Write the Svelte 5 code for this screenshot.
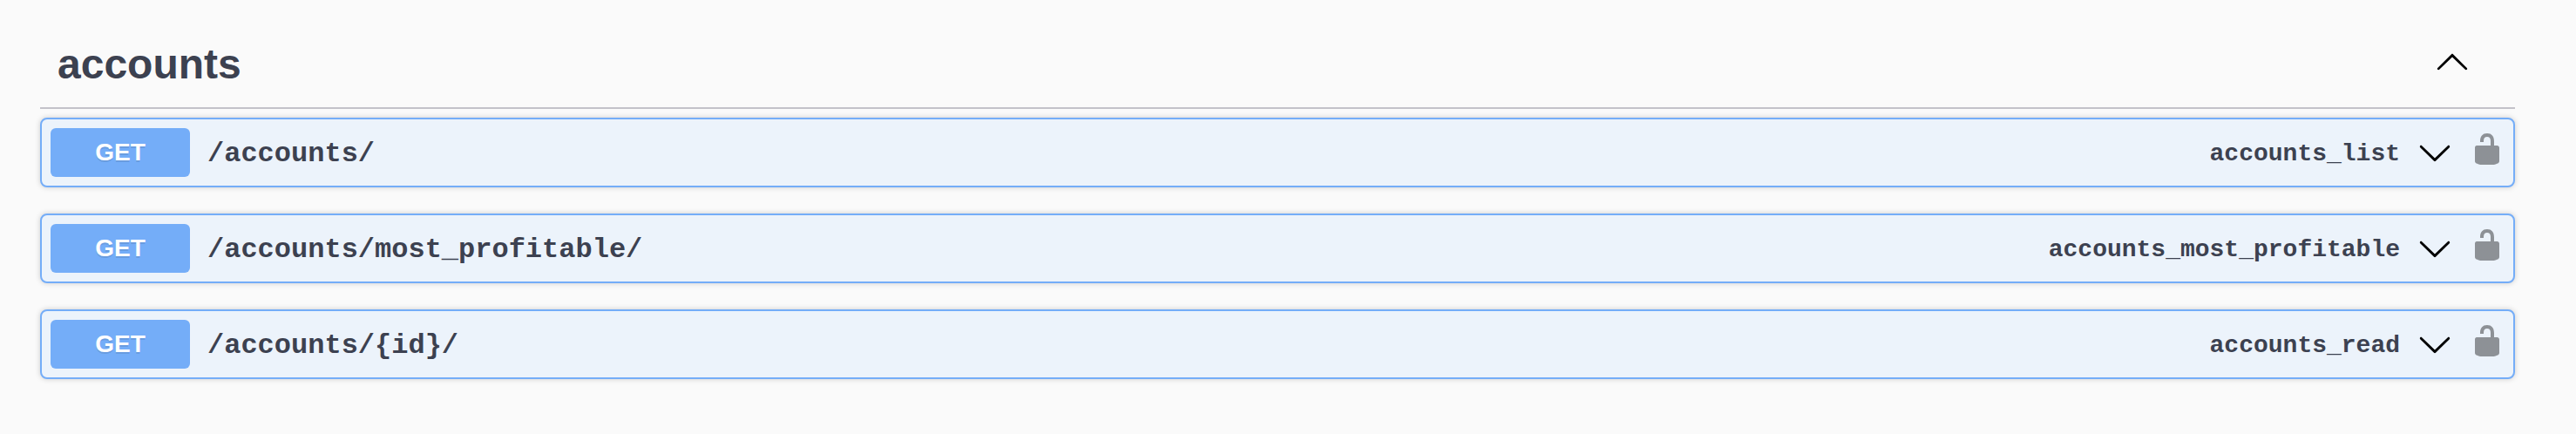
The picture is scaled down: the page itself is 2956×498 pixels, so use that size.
<script>
  const operations = [
    { method: 'GET', path: '/accounts/', id: 'accounts_list' },
    { method: 'GET', path: '/accounts/most_profitable/', id: 'accounts_most_profitable' },
    { method: 'GET', path: '/accounts/{id}/', id: 'accounts_read' }
  ];
</script>

<section class="tag">
  <header class="tag-header">
    <h3>accounts</h3>
    <svg class="icon" viewBox="0 0 20 20" aria-hidden="true">
      <path d="M17.418 14.908c.272.268.709.268.979 0s.271-.701 0-.969l-7.908-7.83c-.27-.268-.707-.268-.979 0l-7.908 7.83c-.27.268-.27.701 0 .969.271.268.709.268.979 0L10 7.767z" />
    </svg>
  </header>

  <div class="operations">
    {#each operations as op}
      <div class="operation">
        <span class="method">{op.method}</span>
        <span class="path">{op.path}</span>
        <span class="id">{op.id}</span>
        <svg class="icon" viewBox="0 0 20 20" aria-hidden="true">
          <path d="M17.418 6.109c.272-.268.709-.268.979 0s.271.701 0 .969l-7.908 7.83c-.27.268-.707.268-.979 0l-7.908-7.83c-.27-.268-.27-.701 0-.969.271-.268.709-.268.979 0L10 13.25z" />
        </svg>
        <svg class="icon lock" viewBox="0 0 20 20" aria-hidden="true">
          <path d="M15.8 8H14V5.6C14 2.703 12.665 1 10 1 7.334 1 6 2.703 6 5.6V6h2v-.801C8 3.754 8.797 3 10 3c1.203 0 2 .754 2 2.199V8H4c-.553 0-1 .646-1 1.199V17c0 .549.428 1.139.951 1.307l1.197.387C5.672 18.861 6.55 19 7.1 19h5.8c.549 0 1.428-.139 1.951-.307l1.196-.387c.524-.167.953-.757.953-1.306V9.199C17 8.646 16.352 8 15.8 8z" />
        </svg>
      </div>
    {/each}
  </div>
</section>

<style>
  :global(body) {
    background: #fafafa;
  }

  .tag {
    box-sizing: border-box;
    height: 498px;
    padding: 15px 70px 0 46px;
    color: #3c4150;
    font-family: 'Liberation Sans', Arial, sans-serif;
  }

  .tag-header {
    box-sizing: border-box;
    height: 110px;
    display: flex;
    align-items: center;
    justify-content: space-between;
    padding: 2px 52px 0 20px;
    border-bottom: 2px solid #c3c2c9;
  }

  h3 {
    margin: 7px 0 0;
    font-size: 48px;
    line-height: 56px;
    font-weight: 700;
  }

  .icon {
    flex: none;
    width: 40px;
    height: 40px;
    fill: #000;
  }

  .operations {
    display: grid;
    gap: 30px;
    padding-top: 10px;
  }

  .operation {
    box-sizing: border-box;
    height: 80px;
    display: flex;
    align-items: center;
    gap: 20px;
    padding: 0 10px;
    border: 2px solid #74adf8;
    border-radius: 8px;
    background: #ecf3fb;
    box-shadow: 0 0 6px rgba(0, 0, 0, 0.19);
  }

  .method {
    flex: none;
    width: 160px;
    border-radius: 6px;
    background: #74adf8;
    color: #fff;
    font-size: 28px;
    line-height: 56px;
    font-weight: 700;
    text-align: center;
    text-shadow: 0 2px 0 rgba(0, 0, 0, 0.1);
  }

  .path,
  .id {
    font-family: 'Liberation Mono', 'Courier New', monospace;
    font-weight: 700;
    line-height: 40px;
    white-space: nowrap;
  }

  .path {
    flex: 1;
    font-size: 32px;
    padding-top: 4px;
  }

  .id {
    font-size: 28px;
    padding-top: 3px;
  }

  .lock {
    margin-bottom: 8px;
    opacity: 0.4;
  }
</style>
